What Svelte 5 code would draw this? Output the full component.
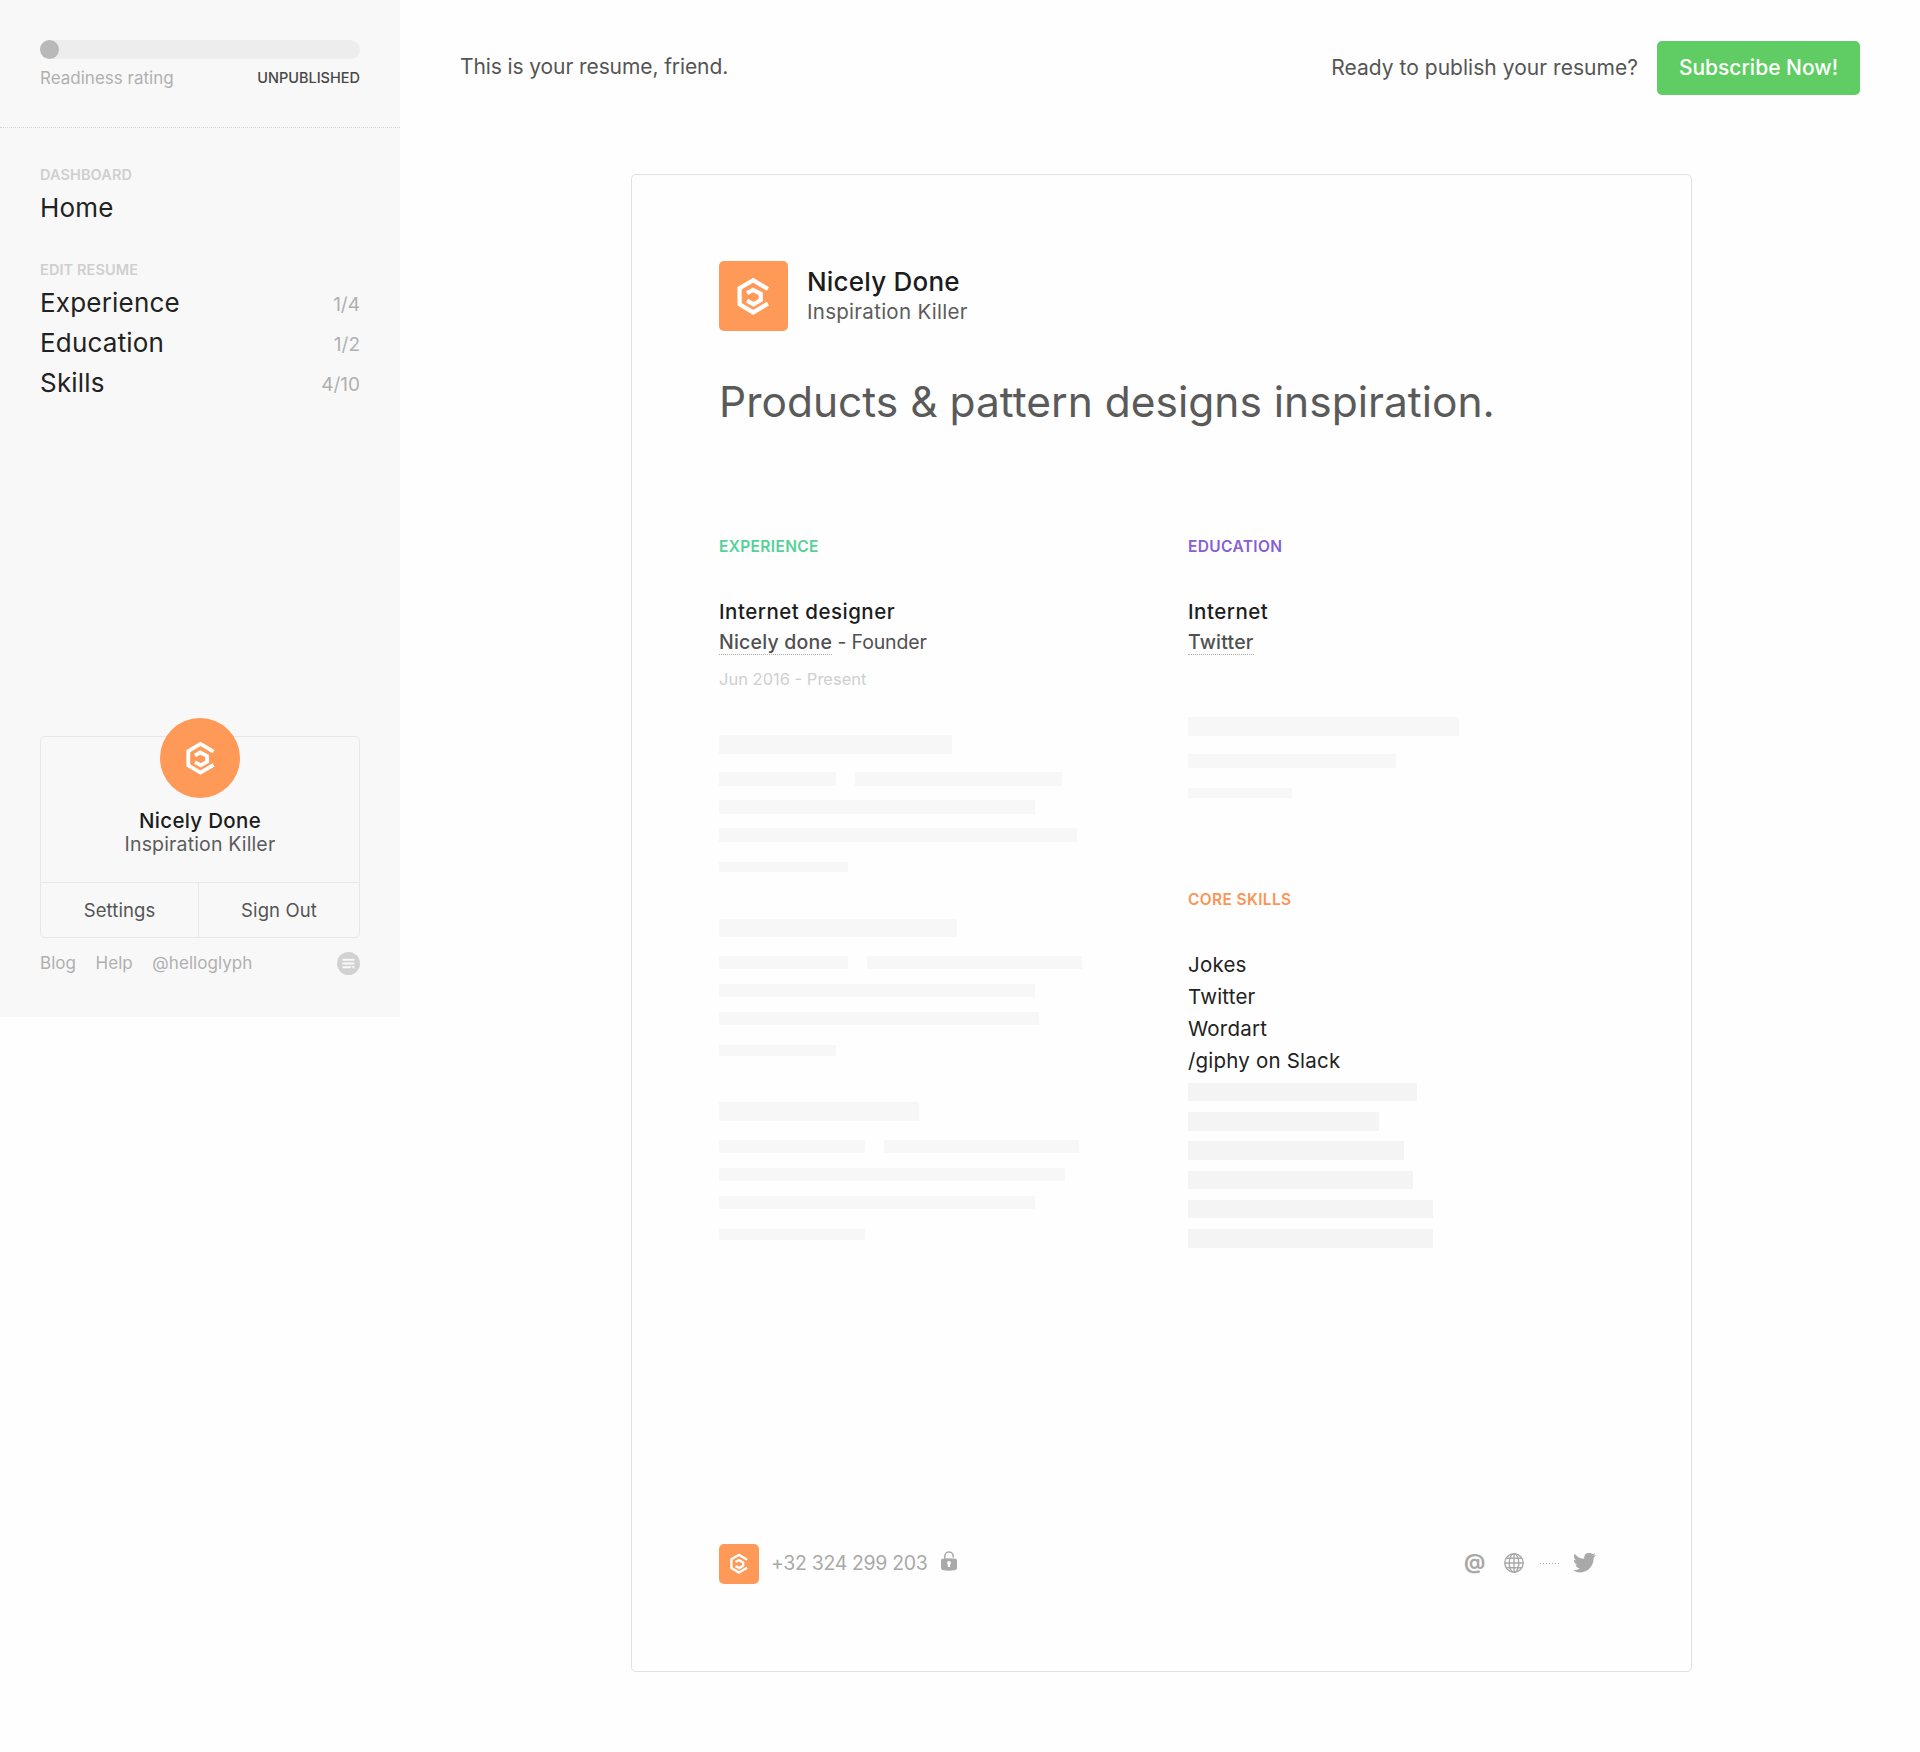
<script lang="ts">
  type MenuItem = { label: string; count: string };
  type Ghost = { title: number; split: number[]; lines: number[]; meta: number };

  const menu: MenuItem[] = [
    { label: "Experience", count: "1/4" },
    { label: "Education", count: "1/2" },
    { label: "Skills", count: "4/10" }
  ];

  // Placeholder widths, in pixels
  const experienceGhosts: Ghost[] = [
    { title: 232.5, split: [116.5, 207.5], lines: [316, 357.5], meta: 128.5 },
    { title: 237.5, split: [128.5, 215.5], lines: [316, 320], meta: 116.5 },
    { title: 200, split: [145.5, 195], lines: [345.5, 316], meta: 145.5 }
  ];
  const skills = ["Jokes", "Twitter", "Wordart", "/giphy on Slack"];
  const skillGhosts = [228.5, 191, 216, 224.5, 245, 245];
</script>

{#snippet mark(size: number)}
  <svg class="mark" width={size} height={size * 1.18} viewBox="110 111 100 118" fill="none" stroke="#fff" stroke-width="13">
    <path d="M205 148 L160 121 L118 145.5 V195 L160 220 L205 193" />
    <path d="M141 161 L159 150.500 L183 163 V182 L161 195 L141 184" />
  </svg>
{/snippet}

<div class="page">
  <aside class="sidebar">
    <section class="readiness">
      <div class="track"><div class="knob"></div></div>
      <div class="rating">
        <span class="rating-label">Readiness rating</span>
        <span class="status">UNPUBLISHED</span>
      </div>
    </section>

    <nav class="menu">
      <p class="menu-label">DASHBOARD</p>
      <div class="menu-item"><span>Home</span></div>
      <p class="menu-label edit">EDIT RESUME</p>
      {#each menu as item}
        <div class="menu-item">
          <span>{item.label}</span>
          <span class="count">{item.count}</span>
        </div>
      {/each}
    </nav>

    <section class="profile">
      <div class="avatar">{@render mark(29)}</div>
      <p class="profile-name">Nicely Done</p>
      <p class="profile-role">Inspiration Killer</p>
      <div class="actions">
        <span class="settings">Settings</span>
        <span>Sign Out</span>
      </div>
    </section>

    <footer class="links">
      <span>Blog</span>
      <span>Help</span>
      <span>@helloglyph</span>
      <svg class="chat" width="23" height="23" viewBox="0 0 22 22">
        <circle cx="11" cy="11" r="11" fill="#d2d2d2" />
        <path d="M6 7.500H16 M6 11H16 M6 14.500H12.500" stroke="#f8f8f8" stroke-width="1.900" stroke-linecap="round" />
        <path d="M13.500 13.500H16.500V16.500Z" fill="#f8f8f8" />
      </svg>
    </footer>
  </aside>

  <main class="main">
    <header class="topbar">
      <span class="greeting">This is your resume, friend.</span>
      <span class="ready">Ready to publish your resume?</span>
      <button type="button" class="subscribe">Subscribe Now!</button>
    </header>

    <article class="resume">
      <header class="identity">
        <div class="logo">{@render mark(32.500)}</div>
        <div>
          <p class="name">Nicely Done</p>
          <p class="role">Inspiration Killer</p>
        </div>
      </header>

      <h1>Products &amp; pattern designs inspiration.</h1>

      <div class="columns">
        <section class="column left">
          <h2 class="green">EXPERIENCE</h2>
          <p class="job">Internet designer</p>
          <p class="company"><span class="link">Nicely done</span> - Founder</p>
          <p class="date">Jun 2016 - Present</p>
          <div class="ghosts">
            {#each experienceGhosts as ghost}
              <div class="ghost">
                <div class="bar title" style="width: {ghost.title}px"></div>
                <div class="split">
                  {#each ghost.split as width}
                    <div class="bar line" style="width: {width}px"></div>
                  {/each}
                </div>
                {#each ghost.lines as width}
                  <div class="bar line" style="width: {width}px"></div>
                {/each}
                <div class="bar meta" style="width: {ghost.meta}px"></div>
              </div>
            {/each}
          </div>
        </section>

        <section class="column">
          <h2 class="purple">EDUCATION</h2>
          <p class="job">Internet</p>
          <p class="company"><span class="link">Twitter</span></p>
          <div class="ghost education-ghost">
            <div class="bar title" style="width: 270.5px"></div>
            <div class="bar line" style="width: 208px"></div>
            <div class="bar meta" style="width: 104px"></div>
          </div>

          <h2 class="orange">CORE SKILLS</h2>
          <ul>
            {#each skills as skill}
              <li>{skill}</li>
            {/each}
          </ul>
          <div class="skill-ghosts">
            {#each skillGhosts as width}
              <div class="bar" style="width: {width}px"></div>
            {/each}
          </div>
        </section>
      </div>

      <footer class="contact">
        <div class="logo small">{@render mark(18)}</div>
        <span class="phone">+32 324 299 203</span>
        <svg class="lock" width="16" height="20" viewBox="0 0 16 20">
          <path d="M3.800 8V5.200a4.200 4.200 0 0 1 8.400 0V6.500" fill="none" stroke="#a9a9a9" stroke-width="1.500" />
          <path d="M0 9.200Q0 7.800 1.400 7.700Q8 6.900 14.600 7.700Q16 7.800 16 9.200V17Q16 18.500 14.500 18.900Q8 20.500 1.500 18.900Q0 18.500 0 17Z" fill="#a9a9a9" />
          <circle cx="8" cy="12" r="1.900" fill="#fff" />
          <path d="M7.200 12H8.800L9.200 16H6.800Z" fill="#fff" />
        </svg>
        <div class="social">
          <span class="at">@</span>
          <svg width="20" height="20" viewBox="0 0 20 20" fill="none" stroke="#a9a9a9" stroke-width="1.400">
            <circle cx="10" cy="10" r="9.200" />
            <ellipse cx="10" cy="10" rx="4.800" ry="9.200" />
            <path d="M10 0.800V19.200M0.800 10H19.200M2.500 5.200H17.500M2.500 14.800H17.500" />
          </svg>
          <div class="dots"></div>
          <svg width="23" height="20" viewBox="0 2.500 24 19.800" preserveAspectRatio="none" fill="#a9a9a9">
            <path d="M23.950 4.570a10 10 0 0 1-2.820.770 4.960 4.960 0 0 0 2.160-2.720c-.950.550-2 .950-3.130 1.180a4.920 4.920 0 0 0-8.380 4.480C7.690 8.100 4.070 6.130 1.640 3.160a4.820 4.820 0 0 0-.670 2.480c0 1.710.870 3.210 2.190 4.100a4.900 4.900 0 0 1-2.230-.620v.060a4.920 4.920 0 0 0 3.950 4.830 5 5 0 0 1-2.210.080 4.940 4.940 0 0 0 4.600 3.420A9.870 9.870 0 0 1 0 19.540a14 14 0 0 0 7.550 2.210c9.050 0 14-7.500 14-13.980 0-.210 0-.420-.020-.630a9.940 9.940 0 0 0 2.460-2.550z" />
          </svg>
        </div>
      </footer>
    </article>
  </main>
</div>

<style>
  :global(body) { background: #fefefe; }

  p, h1, h2, ul { margin: 0; padding: 0; font-weight: inherit; }

  .page {
    display: flex;
    align-items: flex-start;
    width: 1920px;
    height: 1752px;
    font-family: Inter, "Liberation Sans", sans-serif;
    font-weight: 400;
    color: #222;
    white-space: nowrap;
  }

  .mark { display: block; }

  /* Sidebar */
  .sidebar {
    display: flex;
    flex-direction: column;
    flex: none;
    box-sizing: border-box;
    width: 400px;
    height: 1017px;
    background: #f8f8f8;
  }

  .readiness {
    box-sizing: border-box;
    height: 128px;
    padding: 40px 40px 0;
    border-bottom: 1px dotted #d4d4d4;
  }
  .track { height: 19px; border-radius: 10px; background: #ededed; }
  .knob { width: 19px; height: 19px; border-radius: 50%; background: #b9b9b9; }
  .rating { display: flex; justify-content: space-between; margin-top: 7px; line-height: 24px; }
  .rating-label { font-size: 17px; color: #b0b0b0; }
  .status { font-size: 14.500px; font-weight: 500; color: #484848; }

  .menu { padding: 37px 40px 0; }
  .menu-label { margin-bottom: 3px; font-size: 14.500px; font-weight: 600; line-height: 20px; letter-spacing: 0.1px; color: #cfcfcf; }
  .edit { margin-top: 31.500px; }
  .menu-item { display: flex; justify-content: space-between; align-items: baseline; height: 40px; line-height: 40px; font-size: 26px; letter-spacing: 0.2px; }
  .count { position: relative; top: -1px; font-size: 19px; letter-spacing: 0; color: #b0b0b0; }

  .profile {
    box-sizing: border-box;
    height: 202px;
    margin: auto 40px 0;
    border: 1px solid #e8e8e8;
    border-radius: 5px;
    text-align: center;
  }
  .avatar {
    display: flex;
    align-items: center;
    justify-content: center;
    width: 80px;
    height: 80px;
    margin: -19px auto 11px;
    border-radius: 50%;
    background: #ff9957;
  }
  .profile-name { font-size: 20.500px; font-weight: 500; line-height: 23px; letter-spacing: 0.3px; color: #1c1c1c; }
  .profile-role { font-size: 19.500px; line-height: 24px; letter-spacing: 0.15px; color: #5c5c5c; }
  .actions {
    display: grid;
    grid-template-columns: 158px 1fr;
    margin-top: 26px;
    border-top: 1px solid #e8e8e8;
    font-size: 18.500px;
    line-height: 54px;
    letter-spacing: 0.1px;
    color: #555;
  }
  .settings { border-right: 1px solid #e8e8e8; }

  .links { display: flex; align-items: center; height: 22px; margin: 14px 40px 43px; gap: 19.500px; font-size: 17px; letter-spacing: 0.05px; color: #b0b0b0; }
  .chat { margin-left: auto; }

  /* Main */
  .main { flex: 1; }
  .topbar { display: flex; align-items: center; padding: 41px 60px 0; height: 54px; font-size: 21px; letter-spacing: -0.1px; color: #555; }
  .greeting { position: relative; top: -2px; margin-right: auto; }
  .ready { margin: 0 19px 2px 0; letter-spacing: 0.03px; }
  .subscribe {
    width: 203px;
    height: 54px;
    padding: 0 0 2px;
    border: 0;
    border-radius: 5px;
    background: #5fcd63;
    color: #fff;
    font-family: inherit;
    font-size: 21px;
    font-weight: 500;
  }

  .resume {
    display: flex;
    flex-direction: column;
    box-sizing: border-box;
    width: 1061px;
    height: 1498px;
    margin: 79px 0 0 231px;
    padding: 86px 87px 87px;
    border: 1px solid #e0e0e0;
    border-radius: 5px;
  }

  .identity { display: flex; gap: 19px; }
  .logo {
    display: flex;
    align-items: center;
    justify-content: center;
    width: 69px;
    height: 70px;
    border-radius: 5px;
    background: #ff9957;
  }
  .name { margin-top: 5px; font-size: 26px; font-weight: 500; line-height: 32px; letter-spacing: 0.2px; color: #1c1c1c; }
  .role { font-size: 20.500px; line-height: 28px; letter-spacing: 0.28px; color: #5c5c5c; }

  h1 { margin-top: 46px; font-size: 42.500px; line-height: 50px; color: #5a5a5a; }

  .columns { display: flex; margin-top: 108px; }
  .column.left { width: 469px; }
  h2 { font-size: 15.500px; font-weight: 600; line-height: 24px; letter-spacing: 0.35px; }
  .green { color: #55d199; }
  .purple { color: #855fd4; }
  .orange { margin-top: 90px; color: #fb9556; }

  .job { margin-top: 37px; font-size: 20.500px; font-weight: 500; line-height: 32px; letter-spacing: 0.5px; color: #1c1c1c; }
  .company { font-size: 19.500px; line-height: 29px; letter-spacing: -0.15px; color: #505050; }
  .link { display: inline-block; line-height: 23px; border-bottom: 1px dotted #aaa; font-weight: 500; letter-spacing: 0.2px; }
  .date { margin-top: 9px; font-size: 16.500px; line-height: 26px; color: #cfcfcf; }

  .ghosts { margin-top: 43px; display: grid; gap: 46.400px; }
  .ghost .bar { background: #f7f7f7; }
  .ghost .title { height: 18.600px; margin-bottom: 18.800px; }
  .ghost .line { height: 13.300px; margin-bottom: 14.700px; }
  .ghost .meta { height: 10.600px; margin-top: 20px; }
  .split { display: flex; gap: 19px; }
  .education-ghost { margin-top: 60px; }

  ul { margin-top: 37px; list-style: none; font-size: 20.500px; line-height: 32px; letter-spacing: 0.2px; color: #222; }
  .skill-ghosts { display: grid; gap: 10.800px; margin-top: 5.500px; }
  .skill-ghosts .bar { height: 18.500px; background: #f4f4f4; }

  .contact { display: flex; align-items: center; margin-top: auto; color: #a9a9a9; }
  .logo.small { width: 40px; height: 40px; }
  .phone { margin: 0 0 2px 12px; font-size: 19.500px; letter-spacing: -0.35px; }
  .lock { margin: -6px 0 0 14px; }
  .social { display: flex; align-items: center; margin: -2px 8px 0 auto; }
  .at { width: 20px; margin: -3px 20px 0 0; font-size: 21px; font-weight: 700; line-height: 20px; }
  .dots { width: 20px; height: 1px; margin: 0 13px 0 16px; background: repeating-linear-gradient(90deg, #aaa 0 1px, transparent 1px 3px); }
</style>
